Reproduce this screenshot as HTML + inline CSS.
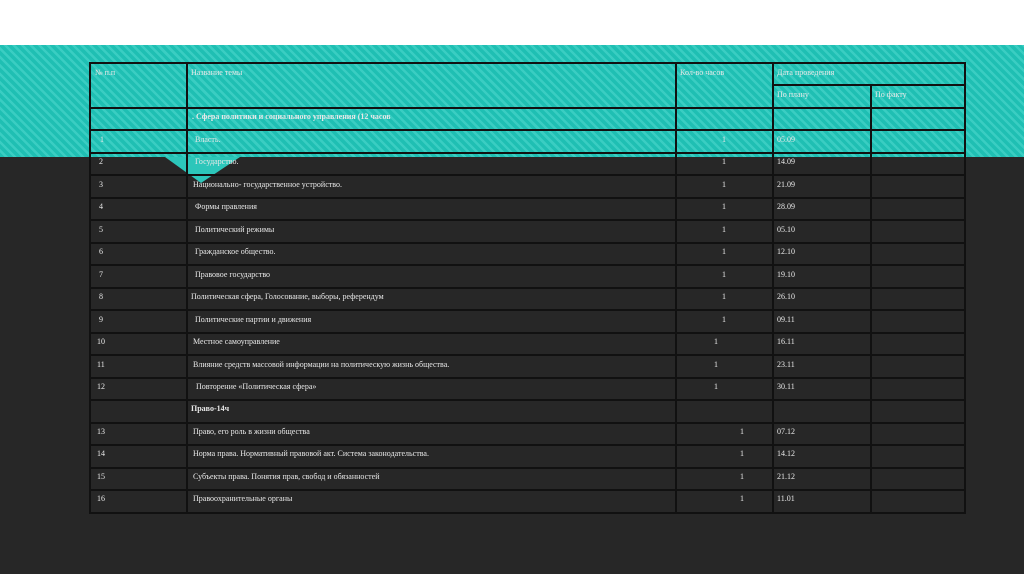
<!DOCTYPE html>
<html><head><meta charset="utf-8"><style>
html,body{margin:0;padding:0}
body{width:1024px;height:574px;position:relative;overflow:hidden;background:#272727;font-family:"Liberation Serif",serif;}
.w{position:absolute;left:0;top:0;width:1024px;height:45px;background:#fff}
.t{position:absolute;left:0;top:45px;width:1024px;height:112px;background:repeating-linear-gradient(45deg,#1fbfb3 0 3.5px,#3acdc2 3.5px 6px)}
.tri{position:absolute;left:165px;top:157px;width:0;height:0;border-left:36px solid transparent;border-right:39px solid transparent;border-top:26px solid #2cc6ba}
.h{position:absolute;height:2px;background:#111}
.v{position:absolute;width:2px;background:#111}
.x{position:absolute;font-size:8px;line-height:10px;color:#e8e8e8;white-space:nowrap}
.b{font-weight:bold}
</style></head><body>
<div class="w"></div><div class="t"></div><div class="tri"></div>
<div class="h" style="left:90px;top:62px;width:876px"></div>
<div class="h" style="left:773px;top:84px;width:193px"></div>
<div class="h" style="left:90px;top:107px;width:876px"></div>
<div class="h" style="left:90px;top:129px;width:876px"></div>
<div class="h" style="left:90px;top:152px;width:876px"></div>
<div class="h" style="left:90px;top:174px;width:876px"></div>
<div class="h" style="left:90px;top:197px;width:876px"></div>
<div class="h" style="left:90px;top:219px;width:876px"></div>
<div class="h" style="left:90px;top:242px;width:876px"></div>
<div class="h" style="left:90px;top:264px;width:876px"></div>
<div class="h" style="left:90px;top:287px;width:876px"></div>
<div class="h" style="left:90px;top:309px;width:876px"></div>
<div class="h" style="left:90px;top:332px;width:876px"></div>
<div class="h" style="left:90px;top:354px;width:876px"></div>
<div class="h" style="left:90px;top:377px;width:876px"></div>
<div class="h" style="left:90px;top:399px;width:876px"></div>
<div class="h" style="left:90px;top:422px;width:876px"></div>
<div class="h" style="left:90px;top:444px;width:876px"></div>
<div class="h" style="left:90px;top:467px;width:876px"></div>
<div class="h" style="left:90px;top:489px;width:876px"></div>
<div class="h" style="left:90px;top:512px;width:876px"></div>
<div class="v" style="left:89px;top:62px;height:452px"></div>
<div class="v" style="left:186px;top:62px;height:452px"></div>
<div class="v" style="left:675px;top:62px;height:452px"></div>
<div class="v" style="left:772px;top:62px;height:452px"></div>
<div class="v" style="left:870px;top:84px;height:430px"></div>
<div class="v" style="left:964px;top:62px;height:452px"></div>

<div class="x" style="left:95px;top:68px">№ п.п</div>
<div class="x" style="left:191px;top:68px">Название темы</div>
<div class="x" style="left:680px;top:68px">Кол-во часов</div>
<div class="x" style="left:777px;top:68px">Дата проведения</div>
<div class="x" style="left:777px;top:90px">По плану</div>
<div class="x" style="left:875px;top:90px">По факту</div>

<div class="x b" style="left:192px;top:112px">. Сфера политики и социального управления (12 часов</div>
<div class="x" style="left:100px;top:135px">1</div><div class="x" style="left:195px;top:135px">Власть.</div><div class="x" style="left:722px;top:135px">1</div><div class="x" style="left:777px;top:135px">05.09</div>
<div class="x" style="left:99px;top:157px">2</div><div class="x" style="left:195px;top:157px">Государство.</div><div class="x" style="left:722px;top:157px">1</div><div class="x" style="left:777px;top:157px">14.09</div>
<div class="x" style="left:99px;top:180px">3</div><div class="x" style="left:193px;top:180px">Национально- государственное устройство.</div><div class="x" style="left:722px;top:180px">1</div><div class="x" style="left:777px;top:180px">21.09</div>
<div class="x" style="left:99px;top:202px">4</div><div class="x" style="left:195px;top:202px">Формы правления</div><div class="x" style="left:722px;top:202px">1</div><div class="x" style="left:777px;top:202px">28.09</div>
<div class="x" style="left:99px;top:225px">5</div><div class="x" style="left:195px;top:225px">Политический режимы</div><div class="x" style="left:722px;top:225px">1</div><div class="x" style="left:777px;top:225px">05.10</div>
<div class="x" style="left:99px;top:247px">6</div><div class="x" style="left:195px;top:247px">Гражданское общество.</div><div class="x" style="left:722px;top:247px">1</div><div class="x" style="left:777px;top:247px">12.10</div>
<div class="x" style="left:99px;top:270px">7</div><div class="x" style="left:195px;top:270px">Правовое государство</div><div class="x" style="left:722px;top:270px">1</div><div class="x" style="left:777px;top:270px">19.10</div>
<div class="x" style="left:99px;top:292px">8</div><div class="x" style="left:191px;top:292px">Политическая сфера, Голосование, выборы, референдум</div><div class="x" style="left:722px;top:292px">1</div><div class="x" style="left:777px;top:292px">26.10</div>
<div class="x" style="left:99px;top:315px">9</div><div class="x" style="left:195px;top:315px">Политические партии и движения</div><div class="x" style="left:722px;top:315px">1</div><div class="x" style="left:777px;top:315px">09.11</div>
<div class="x" style="left:97px;top:337px">10</div><div class="x" style="left:193px;top:337px">Местное самоуправление</div><div class="x" style="left:714px;top:337px">1</div><div class="x" style="left:777px;top:337px">16.11</div>
<div class="x" style="left:97px;top:360px">11</div><div class="x" style="left:193px;top:360px">Влияние средств массовой информации на политическую жизнь общества.</div><div class="x" style="left:714px;top:360px">1</div><div class="x" style="left:777px;top:360px">23.11</div>
<div class="x" style="left:97px;top:382px">12</div><div class="x" style="left:196px;top:382px">Повторение «Политическая сфера»</div><div class="x" style="left:714px;top:382px">1</div><div class="x" style="left:777px;top:382px">30.11</div>
<div class="x b" style="left:191px;top:404px">Право-14ч</div>
<div class="x" style="left:97px;top:427px">13</div><div class="x" style="left:193px;top:427px">Право, его роль в жизни общества</div><div class="x" style="left:740px;top:427px">1</div><div class="x" style="left:777px;top:427px">07.12</div>
<div class="x" style="left:97px;top:449px">14</div><div class="x" style="left:193px;top:449px">Норма права. Нормативный правовой акт. Система законодательства.</div><div class="x" style="left:740px;top:449px">1</div><div class="x" style="left:777px;top:449px">14.12</div>
<div class="x" style="left:97px;top:472px">15</div><div class="x" style="left:193px;top:472px">Субъекты права. Понятия прав, свобод и обязанностей</div><div class="x" style="left:740px;top:472px">1</div><div class="x" style="left:777px;top:472px">21.12</div>
<div class="x" style="left:97px;top:494px">16</div><div class="x" style="left:193px;top:494px">Правоохранительные органы</div><div class="x" style="left:740px;top:494px">1</div><div class="x" style="left:777px;top:494px">11.01</div>
</body></html>
